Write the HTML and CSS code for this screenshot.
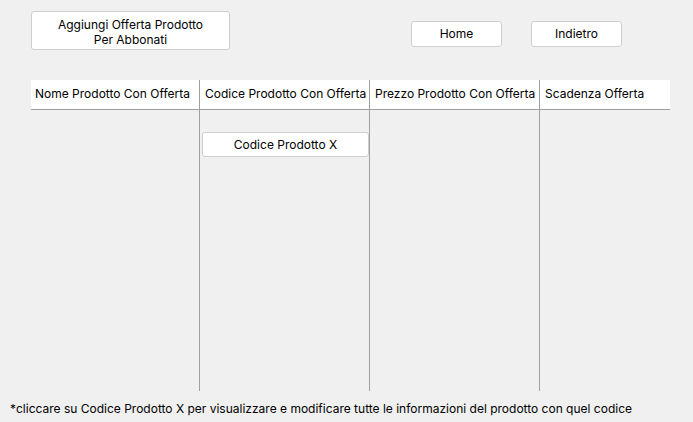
FILE: index.html
```html
<!DOCTYPE html>
<html lang="it">
<head>
<meta charset="utf-8">
<title>Offerte Prodotti Abbonati</title>
<link rel="stylesheet" href="styles.css">
</head>
<body>
<div class="page">
  <div class="topbar">
    <button class="btn btn-add">Aggiungi Offerta Prodotto<br>Per Abbonati</button>
    <button class="btn btn-nav btn-home">Home</button>
    <button class="btn btn-nav btn-back">Indietro</button>
  </div>
  <div class="table">
    <div class="col col-first">
      <div class="head">Nome Prodotto Con Offerta</div>
      <div class="body"></div>
    </div>
    <div class="col">
      <div class="head">Codice Prodotto Con Offerta</div>
      <div class="body">
        <button class="btn btn-code">Codice Prodotto X</button>
      </div>
    </div>
    <div class="col">
      <div class="head">Prezzo Prodotto Con Offerta</div>
      <div class="body"></div>
    </div>
    <div class="col col-last">
      <div class="head">Scadenza Offerta</div>
      <div class="body"></div>
    </div>
  </div>
  <p class="note">*cliccare su Codice Prodotto X per visualizzare e modificare tutte le informazioni del prodotto con quel codice</p>
</div>
</body>
</html>
```
FILE: styles.css
```css
* { box-sizing: border-box; }

html, body {
  margin: 0;
  background: #f0f0f0;
}

body {
  font-family: "Inter", "Noto Sans", sans-serif;
  font-size: 12px;
  line-height: 15px;
  color: #000;
  width: 693px;
  height: 422px;
  overflow: hidden;
}

.page {
  display: flex;
  flex-direction: column;
}

.topbar {
  display: flex;
  align-items: flex-start;
  padding: 11px 0 0 31px;
}

.btn {
  font-family: inherit;
  font-size: 12px;
  line-height: 15px;
  color: #000;
  background: #fff;
  border: 1px solid #cfcfcf;
  border-radius: 3px;
  margin: 0;
  padding: 0;
  text-align: center;
}

.btn-add {
  width: 199px;
  height: 39px;
  padding-top: 5px;
  display: flex;
  flex-direction: column;
  align-items: center;
}

.btn-nav {
  width: 91px;
  height: 26px;
  margin-top: 10px;
  padding-top: 4px;
  display: flex;
  justify-content: center;
  align-items: flex-start;
}

.btn-home { margin-left: 181px; }
.btn-back { margin-left: 29px; }

.table {
  display: grid;
  grid-template-columns: 168px 170px 170px 131px;
  margin: 30px 0 0 31px;
  width: 639px;
  height: 311px;
}

.col {
  display: flex;
  flex-direction: column;
  border-left: 1px solid #a0a0a0;
}

.col-first { border-left: none; }

.head {
  height: 30px;
  background: #fff;
  border-bottom: 1px solid #a0a0a0;
  padding: 6px 0 0 5px;
  white-space: nowrap;
  overflow: hidden;
}

.col-first .head { padding-left: 4px; }

.body {
  flex: 1;
  display: flex;
  flex-direction: column;
  align-items: flex-start;
}

.btn-code {
  width: 167px;
  height: 25px;
  margin: 22px 0 0 2px;
  padding-top: 4px;
  display: flex;
  justify-content: center;
  align-items: flex-start;
}

.note {
  margin: 10px 0 0 0;
  padding-left: 10px;
  white-space: nowrap;
}
```
